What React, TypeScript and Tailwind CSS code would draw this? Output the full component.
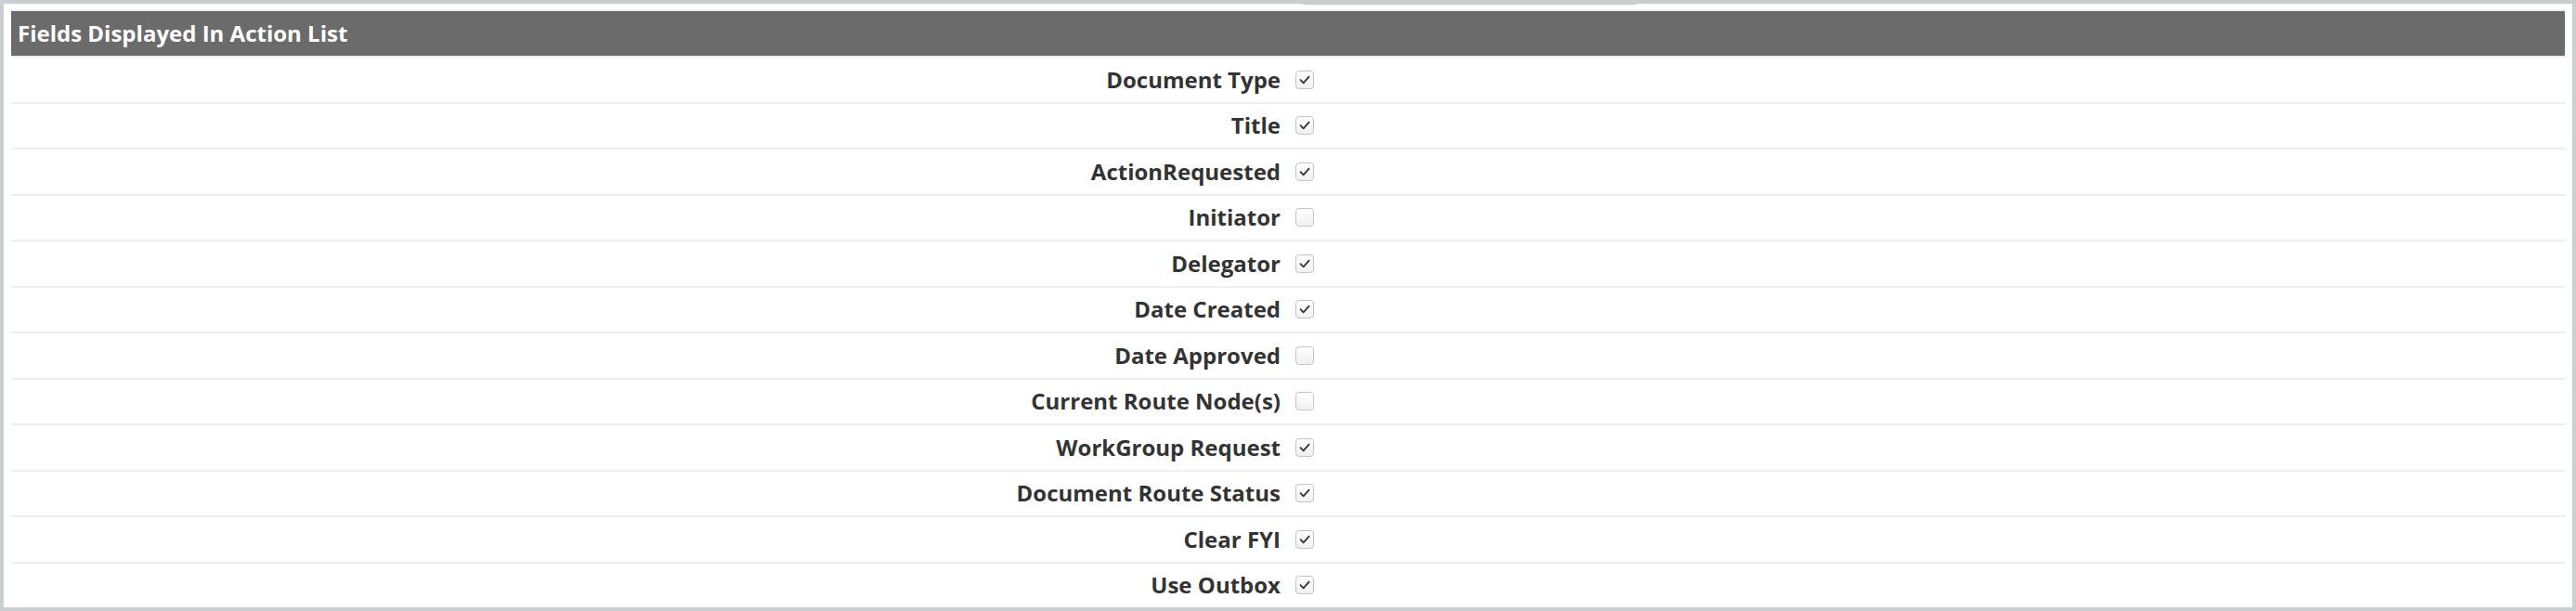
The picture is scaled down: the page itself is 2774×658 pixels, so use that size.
const fields = [
  { label: "Document Type", checked: true },
  { label: "Title", checked: true },
  { label: "ActionRequested", checked: true },
  { label: "Initiator", checked: false },
  { label: "Delegator", checked: true },
  { label: "Date Created", checked: true },
  { label: "Date Approved", checked: false },
  { label: "Current Route Node(s)", checked: false },
  { label: "WorkGroup Request", checked: true },
  { label: "Document Route Status", checked: true },
  { label: "Clear FYI", checked: true },
  { label: "Use Outbox", checked: true },
];

function Checkbox({ checked }: { checked: boolean }) {
  return (
    <span className="w-[20px] h-[20px] rounded-[4px] border-[1.5px] border-[#c4c4c4] bg-gradient-to-b from-white to-[#f1f1f1] flex items-center justify-center">
      {checked && (
        <svg width="14" height="14" viewBox="0 0 14 14" fill="none">
          <path d="M2.5 7.2 L5.6 10.3 L11.6 3.6" stroke="#333" strokeWidth="1.8" strokeLinecap="round" strokeLinejoin="round" />
        </svg>
      )}
    </span>
  );
}

export default function App() {
  return (
    <div className="relative w-[2774px] h-[658px] bg-[#c9cfd1] p-[4px] font-['Open_Sans',sans-serif]">
      <div className="absolute left-[1400px] top-0 w-[365px] h-[5px] rounded-b-[4px] bg-[#c9cfd1]" />
      <div className="h-full bg-white pt-[6px] pl-[8px] pr-[7px]">
        <div className="border-t-2 border-[#eeeeee]">
          <div className="h-[48px] bg-[#6b6b6b] mr-[1px] flex items-center pl-[7px] text-white font-bold text-[24px] leading-none">
            Fields Displayed In Action List
          </div>
          {fields.map((f) => (
            <div key={f.label} className="h-[49.5px] border-t-2 border-[#eeeeee] flex items-center">
              <div className="w-[1367px] text-right font-bold text-[24px] text-[#333333] leading-none">{f.label}</div>
              <div className="ml-[16px]">
                <Checkbox checked={f.checked} />
              </div>
            </div>
          ))}
        </div>
      </div>
    </div>
  );
}
